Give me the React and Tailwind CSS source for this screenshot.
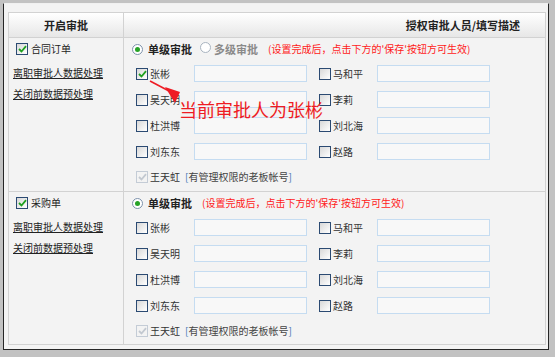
import React from "react";

const people = [
  ["张彬", "马和平"],
  ["吴天明", "李莉"],
  ["杜洪博", "刘北海"],
  ["刘东东", "赵路"],
];

function Box({ checked, disabled }) {
  return (
    <span
      className={
        "inline-flex shrink-0 items-center justify-center w-[12px] h-[12px] border " +
        (disabled
          ? "border-[#c4ccd6] bg-[#f3f3f3]"
          : "border-[#2b4a72] bg-linear-to-br from-[#d8d8d8] to-white")
      }
    >
      {checked && (
        <svg width="9" height="8" viewBox="0 0 9 8">
          <path
            d="M1 4 L3.5 6.5 L8 1.2"
            fill="none"
            stroke={disabled ? "#c2c8d0" : "#1fa01f"}
            strokeWidth="1.8"
          />
        </svg>
      )}
    </span>
  );
}

function Radio({ on }) {
  return (
    <span
      className={
        "inline-flex shrink-0 items-center justify-center w-[11px] h-[11px] rounded-full border bg-white " +
        (on ? "border-[#7d92ab]" : "border-[#a9b4c0]")
      }
    >
      {on && <span className="w-[5px] h-[5px] rounded-full bg-[#27a327]" />}
    </span>
  );
}

function Person({ name, checked }) {
  return (
    <div className="flex items-center h-[17px]">
      <Box checked={checked} />
      <span className="ml-[2px] w-[44px] text-[#333]">{name}</span>
      <input className="w-[113px] h-[17px] border border-[#c5dcf1] bg-[#f8f8f8] outline-none" />
    </div>
  );
}

function Section({ title, multi, first }) {
  return (
    <div className={"flex " + (first ? "h-[154px] border-b border-[#d2d2d2]" : "h-[152px]")}>
      <div className="w-[115px] border-r border-[#d2d2d2] pt-[3px]">
        <div className="flex items-center h-4 pl-[7px]">
          <Box checked />
          <span className="ml-[3px] text-[#222]">{title}</span>
        </div>
        <div className="h-4 mt-[8px] pl-[4px] leading-4 underline text-[#222]">离职审批人数据处理</div>
        <div className="h-4 mt-[5px] pl-[4px] leading-4 underline text-[#222]">关闭前数据预处理</div>
      </div>
      <div className="flex-1 pt-[3px] pl-[8px]">
        <div className="flex items-center h-4">
          <Radio on />
          <span className="ml-[5px] text-[11px] font-bold text-[#222]">单级审批</span>
          {multi && (
            <>
              <span className="ml-[8px]"><Radio /></span>
              <span className="ml-[3px] text-[11px] font-bold text-[#8a8a8a]">多级审批</span>
            </>
          )}
          <span className="ml-[10px] text-[#ff1a1a]">
            (设置完成后，点击下方的'保存'按钮方可生效)
          </span>
        </div>
        <div className="mt-[8px] pl-[4px] grid grid-cols-[171px_171px] gap-x-[12px] gap-y-[9px]">
          {people.map(([a, b], i) => (
            <React.Fragment key={i}>
              <Person name={a} checked={first && i === 0} />
              <Person name={b} />
            </React.Fragment>
          ))}
        </div>
        <div className="mt-[9px] pl-[4px] flex items-center h-4">
          <Box checked disabled />
          <span className="ml-[2px] text-[#333]">王天虹</span>
          <span className="ml-[5px] text-[#444]">
            <span className="text-[#4b79b5]">[</span>有管理权限的老板帐号<span className="text-[#4b79b5]">]</span>
          </span>
        </div>
      </div>
    </div>
  );
}

export default function App() {
  return (
    <div
      className="w-[555px] h-[357px] bg-[#c2c2c2] pl-[3px] pt-[3px] text-[10px] leading-4"
      style={{ fontFamily: '"Noto Sans CJK SC", "Noto Sans", sans-serif' }}
    >
      <div className="relative w-[546px] h-[347px] border-x border-b border-[#262626] border-t border-t-[#f0f0f0] bg-[#f3f3f3] pl-[4px] pr-[2px] pt-[8px]">
        <div className="border border-[#d2d2d2]">
          <div className="flex h-[25px] border-b border-[#d2d2d2] bg-linear-to-b from-white to-[#e7e7e7] text-[11px] font-bold text-[#222]">
            <div className="w-[115px] border-r border-[#d2d2d2] flex items-center justify-center">开启审批</div>
            <div className="flex-1 flex items-center justify-end pr-[25px]">授权审批人员/填写描述</div>
          </div>
          <Section title="合同订单" multi first />
          <Section title="采购单" />
        </div>

        {/* annotation */}
        <div className="absolute left-[175px] top-[95px] text-[18px] leading-[20px] text-[#ee1c24] whitespace-nowrap">
          当前审批人为张彬
        </div>
        <svg className="absolute left-[141px] top-[71px]" width="40" height="30" viewBox="0 0 40 30">
          <path d="M5 6 L24 16" stroke="#ee1c24" strokeWidth="1.6" fill="none" />
          <path d="M20 12 L35 17 L30 28 Z" fill="#ee1c24" />
        </svg>
      </div>
    </div>
  );
}
